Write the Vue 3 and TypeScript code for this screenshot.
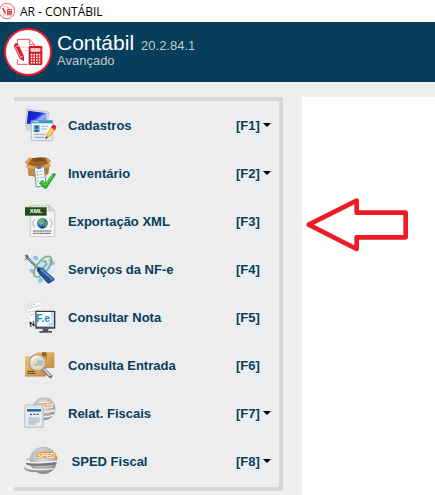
<script setup lang="ts">
interface MenuEntry {
  id: string
  label: string
  shortcut: string
  submenu: boolean
}

const entries: MenuEntry[] = [
  { id: 'cadastros', label: 'Cadastros', shortcut: '[F1]', submenu: true },
  { id: 'inventario', label: 'Inventário', shortcut: '[F2]', submenu: true },
  { id: 'xml', label: 'Exportação XML', shortcut: '[F3]', submenu: false },
  { id: 'servicos', label: 'Serviços da NF-e', shortcut: '[F4]', submenu: false },
  { id: 'nota', label: 'Consultar Nota', shortcut: '[F5]', submenu: false },
  { id: 'entrada', label: 'Consulta Entrada', shortcut: '[F6]', submenu: false },
  { id: 'relatorios', label: 'Relat. Fiscais', shortcut: '[F7]', submenu: true },
  { id: 'sped', label: ' SPED Fiscal', shortcut: '[F8]', submenu: true },
]
</script>

<template>
  <div class="window">
    <svg class="defs" aria-hidden="true">
      <defs>
        <linearGradient id="g-screen" x1="0" y1="0" x2="1" y2="1">
          <stop offset="0" stop-color="#0a12a8" />
          <stop offset="0.45" stop-color="#1a2fe0" />
          <stop offset="0.6" stop-color="#9db8ff" />
          <stop offset="1" stop-color="#2a49e0" />
        </linearGradient>
        <linearGradient id="g-card" x1="0" y1="0" x2="0" y2="1">
          <stop offset="0" stop-color="#ffffff" />
          <stop offset="1" stop-color="#dfe9f2" />
        </linearGradient>
        <linearGradient id="g-box" x1="0" y1="0" x2="1" y2="1">
          <stop offset="0" stop-color="#ecc583" />
          <stop offset="1" stop-color="#c98d3c" />
        </linearGradient>
        <linearGradient id="g-handle" x1="0" y1="1" x2="1" y2="0">
          <stop offset="0" stop-color="#15305f" />
          <stop offset="0.5" stop-color="#2c5596" />
          <stop offset="1" stop-color="#4f7fc0" />
        </linearGradient>
        <radialGradient id="g-globe" cx="0.4" cy="0.35" r="0.7">
          <stop offset="0" stop-color="#9fd4ff" />
          <stop offset="0.5" stop-color="#2f78cf" />
          <stop offset="1" stop-color="#0b2a66" />
        </radialGradient>
        <radialGradient id="g-ball" cx="0.45" cy="0.35" r="0.7">
          <stop offset="0" stop-color="#f0f0f0" />
          <stop offset="0.6" stop-color="#b4b4b4" />
          <stop offset="1" stop-color="#7c7c7c" />
        </radialGradient>
        <symbol id="brand" viewBox="12 84 144 144">
          <circle cx="84" cy="156" r="69" fill="#fff" stroke="#ed1c2a" stroke-width="6" />
          <path d="M52 134V118H88L103 133V138M88 118V133H103M52 178V193H84" fill="none" stroke="#e8525a" stroke-width="3" />
          <path d="M62 142H84M70 152H84" stroke="#f3a9ad" stroke-width="2" />
          <path d="M41 138L46 130L54 131L72 168L72 184L59 176Z" fill="#d81e2c" />
          <path d="M47 143L63 174M44 142L57 136M61 173L70 168" stroke="#fff" stroke-width="2" />
          <rect x="86" y="138" width="41" height="57" rx="4" fill="#d3141f" />
          <rect x="92" y="145" width="29" height="10" fill="#fff" />
          <path d="M94 150H119" stroke="#e8525a" stroke-width="2" />
          <path d="M92 164H121M92 172H121M92 180H121M92 188H121" stroke="#fff" stroke-width="5" stroke-dasharray="5 3" />
        </symbol>
      </defs>
    </svg>

    <div class="titlebar">
      <svg class="titlebar-icon" viewBox="3 0 45 48" aria-hidden="true">
        <use href="#brand" width="48" height="48" />
      </svg>
      <span>AR - CONTÁBIL</span>
    </div>

    <header class="banner">
      <svg class="logo" viewBox="0 0 48 48" aria-hidden="true">
        <use href="#brand" width="48" height="48" />
      </svg>
      <div class="heading">
        <div class="name-line">
          <h1>Contábil</h1>
          <span class="version">20.2.84.1</span>
        </div>
        <p>Avançado</p>
      </div>
    </header>

    <div class="body">
      <nav class="menu">
        <button v-for="entry in entries" :key="entry.id" type="button" class="entry">
          <svg class="icon" viewBox="24 24 102 102" aria-hidden="true">
            <g v-if="entry.id === 'cadastros'">
              <path d="M33 27L99 36L92 84L28 76Z" fill="#d9dcdf" stroke="#b3b7ba" stroke-width="2" />
              <path d="M37 32L93 40L87 78L32 71Z" fill="url(#g-screen)" />
              <path d="M28 78L48 80V96L31 91Z" fill="#cfd3d5" />
              <rect x="46" y="62" width="64" height="60" rx="3" fill="url(#g-card)" stroke="#8bb2cc" stroke-width="2" />
              <rect x="46" y="61" width="64" height="9" fill="#3f94c8" />
              <path d="M50 65H68" stroke="#d6edfa" stroke-width="3" />
              <rect x="53" y="75" width="18" height="21" fill="#5ba5cf" />
              <circle cx="62" cy="82" r="4" fill="#1b5376" />
              <path d="M55 95Q62 83 69 95Z" fill="#1b5376" />
              <path d="M76 79H96M76 87H92M54 103H88M54 112H84" stroke="#93a8b8" stroke-width="3" />
              <path d="M88 117L91 102L108 78L120 87L102 111Z" fill="#f3b63c" />
              <path d="M96 106L112 83" stroke="#ffe08b" stroke-width="4" />
              <path d="M105 82L111 74Q120 74 121 82L116 91Z" fill="#cb2638" />
              <path d="M88 117L90 109L96 113Z" fill="#4c3823" />
            </g>
            <g v-else-if="entry.id === 'inventario'">
              <path d="M34 49L48 31L93 29L99 49L91 80L40 84Z" fill="#9c6428" />
              <path d="M34 51L70 57V90L37 81Z" fill="#c98844" />
              <path d="M70 57L100 49L97 78L70 90Z" fill="#b37130" />
              <path d="M34 50L48 31L40 28L26 43Z" fill="#d99d56" />
              <path d="M48 31L72 28L93 30L87 39L55 41Z" fill="#7e4d1c" />
              <path d="M34 50L69 57L63 67L28 57Z" fill="#e0a964" />
              <path d="M70 57L99 46L106 53L76 68Z" fill="#dca05a" />
              <path d="M87 31L95 30L105 38L99 47Z" fill="#d3934a" />
              <path d="M55 60L85 56L90 113L61 117Z" fill="#f9fcff" stroke="#668dac" stroke-width="3" />
              <path d="M64 61L76 59" stroke="#5c7384" stroke-width="5" />
              <path d="M69 71L82 69M70 80L83 78M71 89L84 87M72 98L83 97" stroke="#b3bec5" stroke-width="3" />
              <path d="M61 72H66M62 81H67M63 90H68M64 99H69" stroke="#4daa41" stroke-width="3" />
              <path d="M70 105L80 98L88 107L111 77L119 78L91 121H85Z" fill="#22b81c" stroke="#0d8a12" stroke-width="2" />
              <path d="M78 102L88 112L111 81" fill="none" stroke="#69e35a" stroke-width="3" />
            </g>
            <g v-else-if="entry.id === 'xml'">
              <path d="M43 28H98L116 45V122H43Z" fill="#f5f5f5" stroke="#b7b7b7" stroke-width="2" />
              <path d="M98 28V45H116Z" fill="#d8d8d8" stroke="#b7b7b7" stroke-width="2" />
              <rect x="27" y="34" width="65" height="25" fill="#234f14" />
              <path d="M27 34H92" stroke="#3e7625" stroke-width="2" />
              <text x="60" y="52" text-anchor="middle" class="xml-text">XML</text>
              <path d="M56 69L49 82L56 95M102 69L109 82L102 95" fill="none" stroke="#c3c3c3" stroke-width="4" />
              <circle cx="79" cy="82" r="16" fill="url(#g-globe)" />
              <path d="M67 72Q76 65 84 70L81 78L75 80L73 88L66 82Z" fill="#67b34c" />
              <path d="M86 78L94 76Q95 88 87 94L83 86Z" fill="#53a340" />
              <path d="M51 105H107M51 112H104" stroke="#555" stroke-width="3" stroke-dasharray="6 1" />
            </g>
            <g v-else-if="entry.id === 'servicos'">
              <path d="M36 36L52 39L60 31L71 42L85 30L94 34L96 48L113 45L120 57L108 68L112 85L95 99L82 114L64 118L65 102L48 100L50 84L34 78L45 65Z" fill="#d9ecf9" />
              <path d="M51 35L64 37L67 49L55 47ZM96 44L111 49L117 61L105 65ZM40 76L53 76L59 90L44 86ZM70 100L80 103L79 115L66 116Z" fill="#8dc1e9" />
              <circle cx="84" cy="67" r="21" fill="#c0e1f7" />
              <circle cx="78" cy="82" r="12" fill="#7ebbe9" />
              <ellipse cx="80" cy="68" rx="17" ry="37" transform="rotate(38 80 68)" fill="none" stroke="#92aa73" stroke-width="5" />
              <path d="M80 53Q92 47 91 62L76 76" fill="none" stroke="#6f9e72" stroke-width="4" />
              <path d="M25 35L34 31L38 40L72 73L67 79L33 45L26 48L31 40Z" fill="#626c77" />
              <path d="M38 43L68 73" stroke="#d8dee3" stroke-width="3" />
              <path d="M63 79Q61 72 70 69L79 73L113 101Q119 106 110 112L101 118Q96 120 91 114L68 88Z" fill="url(#g-handle)" />
              <path d="M73 76L109 106" stroke="#6c99d0" stroke-width="4" />
              <path d="M65 83L74 73" stroke="#173764" stroke-width="4" />
            </g>
            <g v-else-if="entry.id === 'nota'">
              <path d="M27 40L75 26L91 92L45 106Z" fill="#fbfbfb" stroke="#d0d0d0" stroke-width="2" />
              <path d="M33 44L60 36M35 51L74 40M38 61L75 51M41 70L56 66" stroke="#bdbdbd" stroke-width="3" stroke-dasharray="7 2" />
              <text x="42" y="105" class="nfe-dark" transform="rotate(-12 42 105)">N</text>
              <rect x="58" y="56" width="60" height="54" rx="2" fill="#343e43" />
              <rect x="62" y="60" width="52" height="44" fill="#edf6fc" />
              <path d="M89 60H114V104H100Z" fill="#b9dcef" />
              <path d="M62 60H104L108 91L71 100Z" fill="#fff" />
              <text x="61" y="91" class="nfe-blue">F.e</text>
              <path d="M80 110H97V117H108V122H70V117H80Z" fill="#4c5559" />
              <path d="M62 108H114" stroke="#6a7478" stroke-width="2" />
            </g>
            <g v-else-if="entry.id === 'entrada'">
              <rect x="60" y="37" width="55" height="46" rx="3" fill="url(#g-box)" />
              <path d="M78 37H92V58L88 54L84 59L78 55Z" fill="#976028" />
              <rect x="27" y="49" width="63" height="60" rx="3" fill="url(#g-box)" />
              <path d="M28 108H89M60 83H114" stroke="#b67b30" stroke-width="2" />
              <path d="M34 94H56M34 100H60" stroke="#614622" stroke-width="4" stroke-dasharray="5 1" />
              <path d="M77 83L104 109" stroke="#727779" stroke-width="11" stroke-linecap="round" />
              <path d="M79 83L102 106" stroke="#d8dcdd" stroke-width="5" stroke-linecap="round" />
              <circle cx="64" cy="68" r="24" fill="#eadcc0" stroke="#9a8c75" stroke-width="5" />
              <circle cx="64" cy="68" r="23" fill="none" stroke="#ede8df" stroke-width="2" />
              <path d="M63 61H82V77H54V70H63Z" fill="#a8c4c9" />
              <path d="M47 62Q52 50 66 50" fill="none" stroke="#fff" stroke-width="5" />
            </g>
            <g v-else-if="entry.id === 'relatorios'">
              <circle cx="84" cy="62" r="34" fill="url(#g-ball)" />
              <path d="M56 68Q84 76 118 67M57 84Q85 91 112 81" fill="none" stroke="#f2f2f2" stroke-width="5" />
              <path d="M67 43Q91 38 112 47L109 61Q91 55 68 58Z" fill="#f8eee2" />
              <text x="67" y="57" class="sped-small">SPED</text>
              <path d="M24 55L31 50H77L82 58V118H24Z" fill="#d9e0e5" stroke="#a7b0b7" stroke-width="2" />
              <path d="M32 59H76V114H32Z" fill="#ecf0f2" />
              <rect x="33" y="63" width="42" height="8" fill="#1672b7" />
              <path d="M42 79H69" stroke="#444" stroke-width="4" stroke-dasharray="6 4" />
              <path d="M37 90H71M37 96H71M37 102H71M37 108H60" stroke="#9ba8b1" stroke-width="3" />
            </g>
            <g v-else>
              <path d="M25 93Q36 101 61 99L62 108Q36 109 27 101Z" fill="#999" />
              <circle cx="82" cy="73" r="41" fill="url(#g-ball)" />
              <path d="M29 79Q48 87 119 78L116 86Q55 93 32 86Z" fill="#777" />
              <path d="M27 76Q49 84 123 75M31 96Q66 104 112 98" fill="none" stroke="#f4f4f4" stroke-width="4" />
              <path d="M31 72Q38 65 54 67L119 66" fill="none" stroke="#c6c6c6" stroke-width="5" />
              <path d="M60 50Q91 42 119 53L126 69Q94 61 63 68Z" fill="#dc9343" />
              <text x="63" y="66" class="sped-text">SPED</text>
            </g>
          </svg>
          <span class="label">{{ entry.label }}</span>
          <span class="shortcut">
            {{ entry.shortcut }}
            <span v-if="entry.submenu" class="caret" aria-hidden="true"></span>
          </span>
        </button>
      </nav>

      <main class="workspace">
        <svg class="pointer" viewBox="252 381 318 168" aria-hidden="true">
          <path d="M266 464L410 392V428H557V502H410V537Z" fill="#fff" stroke="#ed1c24" stroke-width="14" stroke-linejoin="round" />
        </svg>
      </main>
    </div>
  </div>
</template>

<style>
body {
  margin: 0;
}
</style>

<style scoped>
.window {
  display: flex;
  flex-direction: column;
  min-height: 100vh;
  background: #efefef;
  font-family: "Liberation Sans", Arial, sans-serif;
}

.defs {
  position: absolute;
  width: 0;
  height: 0;
}

.titlebar {
  display: flex;
  align-items: center;
  gap: 5px;
  height: 22px;
  background: #fff;
  color: #000;
  font-family: "Open Sans", "Noto Sans", sans-serif;
  font-size: 12px;
}

.titlebar-icon {
  width: 15px;
  height: 16px;
}

.banner {
  display: flex;
  align-items: center;
  gap: 5px;
  box-sizing: border-box;
  height: 60px;
  padding: 0 4px;
  background: #063e5c;
  color: #c4c8ca;
  font-size: 13px;
}

.logo {
  width: 48px;
  height: 48px;
}

.heading {
  padding-bottom: 4px;
}

.name-line {
  display: flex;
  align-items: baseline;
  gap: 7px;
}

h1 {
  margin: 0;
  color: #fff;
  font-size: 21px;
  font-weight: 400;
  line-height: 22px;
}

p {
  margin: 0;
  line-height: 14px;
}

.body {
  display: flex;
  flex: 1;
  gap: 19px;
  padding: 15px 0 0 14px;
}

.menu {
  box-sizing: border-box;
  align-self: flex-start;
  flex: 0 0 269px;
  padding-bottom: 2px;
  border: solid #d8d8d8;
  border-width: 4px 4px 4px 0;
  background: #ededed;
}

.entry {
  display: grid;
  grid-template-columns: 34px 1fr 43px;
  align-items: center;
  width: 100%;
  height: 48px;
  padding: 0 0 0 10px;
  border: 0;
  background: none;
  color: #063e5c;
  font: bold 13px "Liberation Sans", Arial, sans-serif;
  text-align: left;
}

.icon {
  width: 34px;
  height: 34px;
}

.label {
  padding-left: 10px;
  white-space: pre;
}

.shortcut {
  display: flex;
  align-items: center;
  gap: 3px;
}

.caret {
  border: solid transparent;
  border-width: 4px 4px 0;
  border-top-color: #000;
}

.workspace {
  flex: 1;
  min-width: 0;
  padding: 100px 0 0 2px;
  background: #fff;
}

.pointer {
  display: block;
  width: 106px;
  height: 56px;
}

.xml-text {
  fill: #fff;
  font: bold 18px "Liberation Sans", Arial, sans-serif;
}

.nfe-dark {
  fill: #111;
  font: bold 22px "Liberation Sans", Arial, sans-serif;
}

.nfe-blue {
  fill: #1590d0;
  font: bold 31px "Liberation Sans", Arial, sans-serif;
}

.sped-small {
  fill: #d79a4d;
  font: bold 15px "Liberation Sans", Arial, sans-serif;
}

.sped-text {
  fill: #fff3d8;
  font: bold 20px "Liberation Sans", Arial, sans-serif;
}
</style>
